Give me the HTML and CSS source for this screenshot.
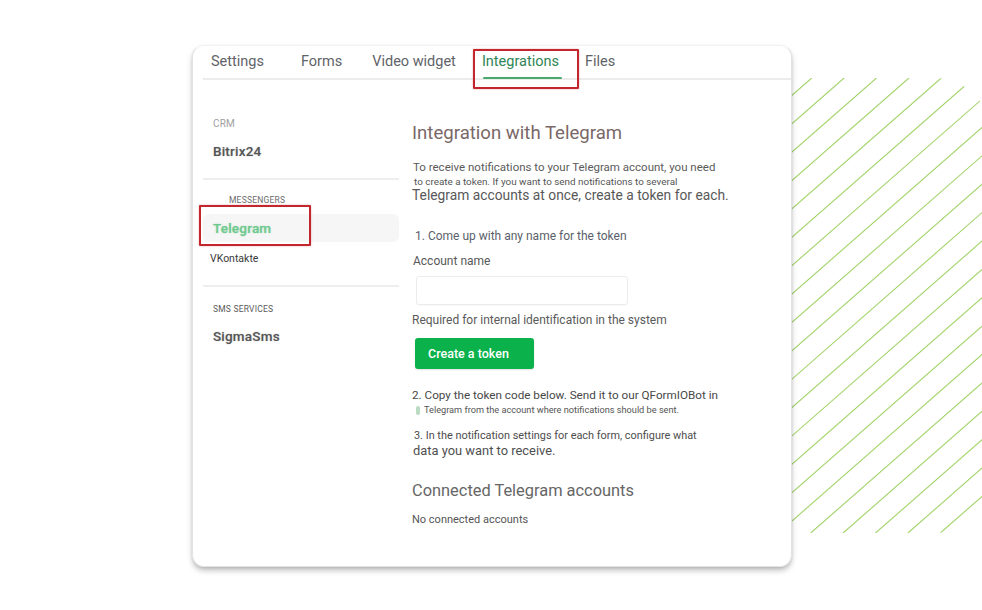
FILE: index.html
```html
<!DOCTYPE html>
<html lang="en">
<head>
<meta charset="utf-8">
<title>Integrations</title>
<link rel="stylesheet" href="styles.css">
</head>
<body>
<div class="stage">
  <svg class="stripes" width="222" height="455" viewBox="0 0 222 455" aria-hidden="true">
    <defs>
      <clipPath id="clip"><rect x="-40" y="0" width="270" height="455" rx="55" ry="55"/></clipPath>
    </defs>
    <g clip-path="url(#clip)" stroke="#a3d36a" stroke-width="1.1">
      <line x1="51.7" y1="0" x2="-467.7" y2="455"/>
      <line x1="84.1" y1="0" x2="-435.3" y2="455"/>
      <line x1="116.5" y1="0" x2="-402.9" y2="455"/>
      <line x1="148.9" y1="0" x2="-370.5" y2="455"/>
      <line x1="181.3" y1="0" x2="-338.1" y2="455"/>
      <line x1="213.7" y1="0" x2="-305.7" y2="455"/>
      <line x1="246.1" y1="0" x2="-273.3" y2="455"/>
      <line x1="278.5" y1="0" x2="-240.9" y2="455"/>
      <line x1="310.9" y1="0" x2="-208.5" y2="455"/>
      <line x1="343.3" y1="0" x2="-176.1" y2="455"/>
      <line x1="375.7" y1="0" x2="-143.7" y2="455"/>
      <line x1="408.1" y1="0" x2="-111.3" y2="455"/>
      <line x1="440.5" y1="0" x2="-78.9" y2="455"/>
      <line x1="472.9" y1="0" x2="-46.5" y2="455"/>
      <line x1="505.3" y1="0" x2="-14.1" y2="455"/>
      <line x1="537.7" y1="0" x2="18.3" y2="455"/>
      <line x1="570.1" y1="0" x2="50.7" y2="455"/>
      <line x1="602.5" y1="0" x2="83.1" y2="455"/>
      <line x1="634.9" y1="0" x2="115.5" y2="455"/>
      <line x1="667.3" y1="0" x2="147.9" y2="455"/>
      <line x1="699.7" y1="0" x2="180.3" y2="455"/>
      <line x1="732.1" y1="0" x2="212.7" y2="455"/>
      <line x1="764.5" y1="0" x2="245.1" y2="455"/>
    </g>
  </svg>

  <div class="card">
    <nav class="tabs">
      <span class="tab tab-settings">Settings</span>
      <span class="tab tab-forms">Forms</span>
      <span class="tab tab-video">Video widget</span>
      <span class="tab tab-integrations active">Integrations</span>
      <span class="tab tab-files">Files</span>
    </nav>

    <div class="body">
      <aside class="sidebar">
        <div class="sec-label crm">CRM</div>
        <div class="item bitrix">Bitrix24</div>
        <div class="divider first"></div>
        <div class="sec-label messengers">MESSENGERS</div>
        <div class="item-row">Telegram</div>
        <div class="vk">VKontakte</div>
        <div class="divider second"></div>
        <div class="sec-label sms">SMS SERVICES</div>
        <div class="item sigma">SigmaSms</div>
      </aside>

      <main class="main">
        <h1 class="title">Integration with Telegram</h1>
        <p class="p1">To receive notifications to your Telegram account, you need</p>
        <p class="p2">to create a token. If you want to send notifications to several</p>
        <p class="p3">Telegram accounts at once, create a token for each.</p>

        <p class="step1">1. Come up with any name for the token</p>
        <label class="field-label">Account name</label>
        <div class="input"></div>
        <p class="hint">Required for internal identification in the system</p>
        <div class="btn">Create a token</div>

        <p class="step2">2. Copy the token code below. Send it to our QFormIOBot in</p>
        <p class="step2b"><span class="pill"></span>Telegram from the account where notifications should be sent.</p>
        <p class="step3">3. In the notification settings for each form, configure what</p>
        <p class="step3b">data you want to receive.</p>

        <h2 class="sub">Connected Telegram accounts</h2>
        <p class="none">No connected accounts</p>
      </main>
    </div>

    <div class="mark mark-tab"></div>
    <div class="mark mark-side"></div>
  </div>
</div>
</body>
</html>
```

FILE: styles.css
```css
* { box-sizing: border-box; }
html, body {
  margin: 0;
  padding: 0;
  background: #ffffff;
  width: 982px;
  height: 610px;
  overflow: hidden;
  font-family: Roboto, "Liberation Sans", Arial, sans-serif;
}
.stage {
  position: relative;
  width: 982px;
  height: 610px;
  padding: 45px 0 0 192px;
}
.stripes {
  position: absolute;
  left: 760px;
  top: 78px;
  z-index: 0;
}
.card {
  position: relative;
  z-index: 1;
  width: 600px;
  height: 522px;
  background: #ffffff;
  border: 1px solid #e3e3e3;
  border-top-color: #f2f2f2;
  border-radius: 12px;
  box-shadow: 0 4px 6px -1px rgba(0, 0, 0, 0.28), 0 1px 3px rgba(0, 0, 0, 0.08);
  padding-left: 10px;
}

/* Tabs */
.tabs {
  display: flex;
  align-items: flex-end;
  height: 34px;
  width: 588px;
  border-bottom: 2px solid #ececec;
}
.tab {
  position: relative;
  font-size: 14.5px;
  line-height: 18px;
  color: #5f6368;
  padding-bottom: 7px;
  white-space: nowrap;
}
.tab-settings { margin-left: 8px; }
.tab-forms { margin-left: 37px; }
.tab-video { margin-left: 30px; }
.tab-integrations { margin-left: 26px; }
.tab-files { margin-left: 26px; }
.tab.active { color: #2f8553; }
.tab.active::after {
  content: "";
  position: absolute;
  left: 1px;
  right: -3px;
  bottom: -1px;
  height: 2px;
  border-radius: 2px;
  background: #47aa6c;
}

/* Body */
.body {
  display: flex;
}
.sidebar {
  width: 196px;
  flex: none;
}
.sec-label {
  font-size: 8.5px;
  letter-spacing: 0.2px;
  color: #6b6b6b;
}
.crm {
  margin-top: 38px;
  line-height: 12px;
  font-size: 10px;
  color: #a0a0a0;
  padding-left: 10px;
}
.item {
  font-size: 13.5px;
  font-weight: 500;
  color: #555555;
  line-height: 20px;
  padding-left: 10px;
  letter-spacing: 0.2px;
  text-shadow: 0 0 1.5px rgba(0,0,0,0.25);
}
.bitrix { margin-top: 11px; }
.divider {
  height: 2px;
  background: #eeeeee;
}
.divider.first { margin-top: 17px; }
.divider.second { margin-top: 19px; }
.messengers {
  margin-top: 15px;
  line-height: 10px;
  padding-left: 26px;
}
.item-row {
  margin-top: 9px;
  height: 28px;
  line-height: 28px;
  padding-left: 10px;
  background: #f6f6f6;
  border-radius: 6px;
  font-size: 13.5px;
  font-weight: 500;
  color: #6cc98c;
  letter-spacing: 0.2px;
  text-shadow: 0 0 1.5px rgba(60,170,100,0.45);
}
.vk {
  margin-top: 10px;
  line-height: 14px;
  font-size: 10.5px;
  color: #3a3a3a;
  padding-left: 7px;
}
.sms {
  margin-top: 17px;
  line-height: 10px;
  padding-left: 10px;
  color: #5a5a5a;
}
.sigma {
  margin-top: 12px;
  color: #555555;
}

/* Main */
.main {
  padding-left: 13px;
  color: #5b5b5b;
}
.main p, .main h1, .main h2 { margin: 0; font-weight: 400; white-space: nowrap; }
.title {
  margin-top: 41px !important;
  font-size: 18.6px;
  line-height: 24px;
  color: #7a6868;
}
.p1 { margin-top: 15px !important; font-size: 11.5px; line-height: 14px; padding-left: 1px; }
.p2 { margin-top: 2px !important; font-size: 9.9px; line-height: 12px; padding-left: 2px; color: #555; }
.p3 { margin-top: -1px !important; font-size: 13.8px; line-height: 16px; color: #585858; }
.step1 { margin-top: 25px !important; font-size: 12px; line-height: 16px; padding-left: 3px; color: #5a5f6a; }
.field-label { display: block; margin-top: 9px; font-size: 12px; line-height: 16px; padding-left: 1px; color: #585858; }
.input {
  margin-top: 7px;
  margin-left: 4px;
  width: 212px;
  height: 29px;
  border: 1px solid #ececec;
  border-radius: 3px;
  background: #fff;
  box-shadow: 0 1px 1px rgba(0,0,0,0.03);
}
.hint { margin-top: 7px !important; font-size: 12px; line-height: 16px; color: #5a5a5a; }
.btn {
  margin-top: 10px;
  margin-left: 3px;
  width: 119px;
  height: 31px;
  border-radius: 3px;
  background: #0bb24c;
  color: #ffffff;
  font-size: 12.5px;
  font-weight: 500;
  line-height: 31px;
  padding-left: 13px;
  box-shadow: 0 1px 2px rgba(0,0,0,0.12);
}
.step2 { margin-top: 18px !important; font-size: 11.7px; line-height: 16px; color: #474747; }
.step2b { margin-top: 1px !important; font-size: 9.2px; line-height: 12px; padding-left: 4px; color: #555; display: flex; align-items: center; }
.pill {
  display: inline-block;
  width: 4px;
  height: 9px;
  border-radius: 2px;
  background: #b9dcc2;
  margin-right: 4px;
}
.step3 { margin-top: 13px !important; font-size: 10.9px; line-height: 14px; padding-left: 2px; color: #4d4d4d; }
.step3b { font-size: 12.9px; line-height: 16px; padding-left: 1px; color: #4f4f4f; }
.sub {
  margin-top: 21px !important;
  font-size: 16.4px;
  line-height: 22px;
  color: #666666;
}
.none { margin-top: 11px !important; font-size: 11px; line-height: 14px; color: #555; }

/* Annotation marks */
.mark {
  position: absolute;
  border: 2px solid #c4262d;
  border-radius: 1px;
  box-shadow: 0 0 2px rgba(196,38,45,0.4);
}
.mark-tab { left: 280px; top: 3px; width: 106px; height: 40px; }
.mark-side { left: 6px; top: 159px; width: 112px; height: 41px; }
```
